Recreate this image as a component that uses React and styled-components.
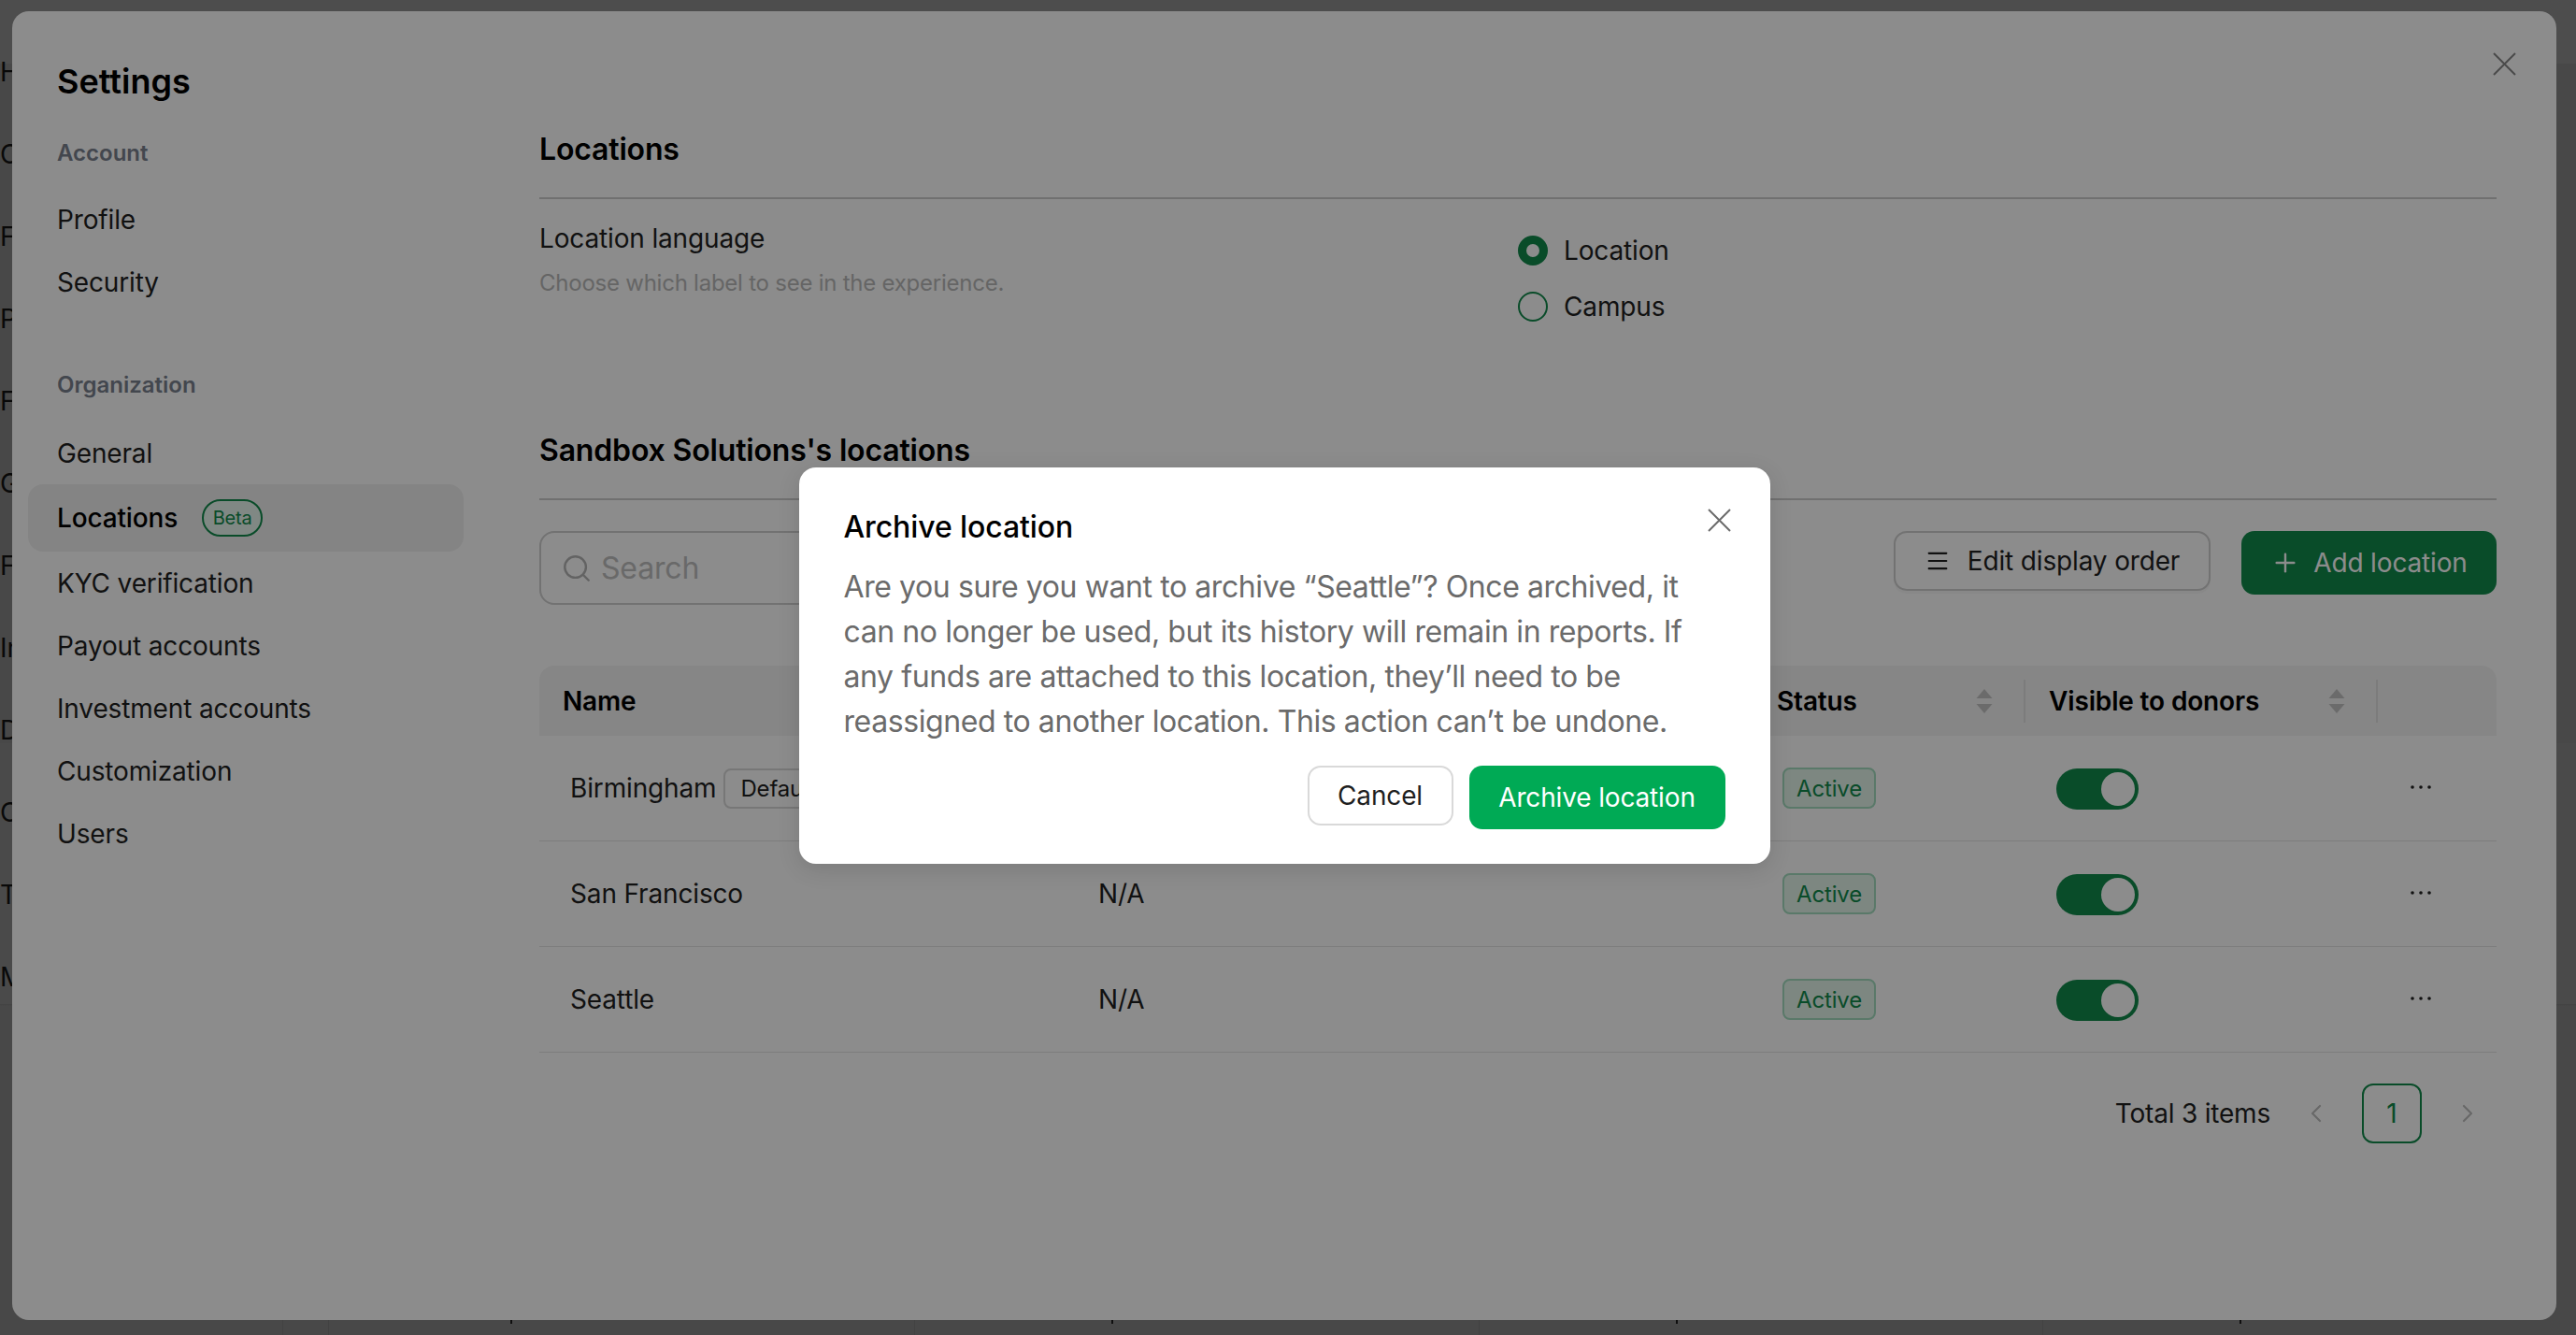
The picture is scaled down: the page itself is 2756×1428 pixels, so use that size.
import React from 'react';
import styled, { createGlobalStyle } from 'styled-components';
import { Search, Menu, Plus, ChevronLeft, ChevronRight } from 'lucide-react';

const GlobalStyle = createGlobalStyle`
	html, body {
		margin: 0;
		padding: 0;
		height: 100%;
		overflow: hidden;
	}
	body {
		font-family: Inter, "Liberation Sans", sans-serif;
		color: #1f1f1f;
		background: #f0f0f0;
	}
`;

const GREEN = '#00aa55';
const SHEET_GREEN = '#128a4c';

const accountLinks = ['Profile', 'Security'];
const orgLinks = ['General', 'Locations', 'KYC verification', 'Payout accounts', 'Investment accounts', 'Customization', 'Users'];
const hiddenNav = ['H', 'C', 'F', 'P', 'F', 'G', 'F', 'In', 'D', 'C', 'T', 'M'];
const backTicks = [
	{ x: 302, soft: true }, { x: 351, soft: true }, { x: 546 }, { x: 978, soft: true },
	{ x: 1189 }, { x: 1582, soft: true }, { x: 1793 }, { x: 2185, soft: true }, { x: 2396 },
];
const rows = [
	{ name: 'Birmingham', isDefault: true, code: '' },
	{ name: 'San Francisco', code: 'N/A' },
	{ name: 'Seattle', code: 'N/A' },
];

const CloseIcon = ({ size = 25 }) => (
	<svg width={size} height={size} viewBox="0 0 25 25" fill="none" stroke="currentColor" strokeWidth="2">
		<path d="M1 1L24 24M24 1L1 24" />
	</svg>
);

const SortIcon = () => (
	<svg width="18" height="26" viewBox="0 0 18 26" fill="#c4c4c4">
		<path d="M9 0L17.5 10H0.5Z" />
		<path d="M0.5 16H17.5L9 26Z" />
	</svg>
);

const DotsIcon = () => (
	<svg width="22" height="4" viewBox="0 0 22 4" fill="#1f1f1f">
		<circle cx="2" cy="2" r="1.8" />
		<circle cx="11" cy="2" r="1.8" />
		<circle cx="20" cy="2" r="1.8" />
	</svg>
);

export default function App() {
	return (
		<>
			<GlobalStyle />
			<BackPage>
				<BackNav>
					{hiddenNav.map((letter, index) => (
						<BackNavItem key={index}>{letter}</BackNavItem>
					))}
				</BackNav>
				{backTicks.map((tick) => (
					<BackTick key={tick.x} $x={tick.x} $soft={tick.soft} />
				))}
			</BackPage>

			<SheetMask>
				<Sheet>
					<SheetClose><CloseIcon /></SheetClose>

					<Sidebar>
						<SettingsTitle>Settings</SettingsTitle>
						<GroupLabel $top={35} $bottom={20}>Account</GroupLabel>
						{accountLinks.map((link) => (
							<NavItem key={link}>{link}</NavItem>
						))}
						<GroupLabel $top={60} $bottom={22}>Organization</GroupLabel>
						{orgLinks.map((link) => (
							<NavItem key={link} $active={link === 'Locations'}>
								{link}
								{link === 'Locations' && <BetaPill>Beta</BetaPill>}
							</NavItem>
						))}
					</Sidebar>

					<Main>
						<SectionHeader>Locations</SectionHeader>
						<LanguageRow>
							<div>
								<FieldLabel>Location language</FieldLabel>
								<FieldHint>Choose which label to see in the experience.</FieldHint>
							</div>
							<RadioGroup>
								<RadioRow><RadioDot $checked />Location</RadioRow>
								<RadioRow><RadioDot />Campus</RadioRow>
							</RadioGroup>
						</LanguageRow>

						<SectionHeader $top={114}>Sandbox Solutions's locations</SectionHeader>

						<Toolbar>
							<SearchBox>
								<Search size={34} strokeWidth={1.7} color="#b5b5b5" />
								<SearchText>Search</SearchText>
							</SearchBox>
							<ToolbarActions>
								<EditButton><Menu size={28} strokeWidth={1.8} />Edit display order</EditButton>
								<AddButton><Plus size={32} strokeWidth={1.8} />Add location</AddButton>
							</ToolbarActions>
						</Toolbar>

						<TableHead>
							<HeadCell>Name</HeadCell>
							<HeadCell />
							<HeadCell $divider>Status<SortIcon /></HeadCell>
							<HeadCell $divider>Visible to donors<SortIcon /></HeadCell>
							<HeadCell />
						</TableHead>
						{rows.map((row) => (
							<TableRow key={row.name}>
								<Cell>
									{row.name}
									{row.isDefault && <DefaultTag>Default</DefaultTag>}
								</Cell>
								<Cell>{row.code}</Cell>
								<StatusCell><ActiveBadge>Active</ActiveBadge></StatusCell>
								<Cell><Toggle><Knob /></Toggle></Cell>
								<DotsCell><DotsIcon /></DotsCell>
							</TableRow>
						))}

						<Pagination>
							<TotalText>Total 3 items</TotalText>
							<PageArrow><ChevronLeft size={32} strokeWidth={1.6} /></PageArrow>
							<PageBox>1</PageBox>
							<PageArrow><ChevronRight size={32} strokeWidth={1.6} /></PageArrow>
						</Pagination>
					</Main>
				</Sheet>
			</SheetMask>

			<DialogMask>
				<Dialog>
					<DialogClose><CloseIcon /></DialogClose>
					<DialogTitle>Archive location</DialogTitle>
					<DialogText>
						Are you sure you want to archive “Seattle”? Once archived, it can no longer be used, but its history will remain in reports. If any funds are attached to this location, they’ll need to be reassigned to another location. This action can’t be undone.
					</DialogText>
					<DialogActions>
						<CancelButton>Cancel</CancelButton>
						<ConfirmButton>Archive location</ConfirmButton>
					</DialogActions>
				</Dialog>
			</DialogMask>
		</>
	);
}

const BackPage = styled.div`
	position: fixed;
	inset: 0;
	overflow: hidden;
	background: linear-gradient(
		#ffffff 0,
		#ffffff 68px,
		#eeeeee 68px,
		#eeeeee 795px,
		#f6f6f6 795px,
		#f6f6f6 1074px,
		#e0e0e0 1074px,
		#eeeeee 1076px
	);
`;

const BackNav = styled.div`
	display: flex;
	flex-direction: column;
	padding-top: 33px;
`;

const BackNavItem = styled.div`
	height: 88px;
	line-height: 88px;
	font-size: 28px;
	color: #1f1f1f;
`;

const BackTick = styled.span`
	position: absolute;
	left: ${(p) => p.$x}px;
	top: 1412px;
	width: ${(p) => (p.$soft ? 1 : 2)}px;
	height: ${(p) => (p.$soft ? 16 : 4)}px;
	background: ${(p) => (p.$soft ? '#dddddd' : '#333333')};
`;

const SheetMask = styled.div`
	position: fixed;
	inset: 0;
	display: flex;
	padding: 12px 21px 16px 13px;
	box-sizing: border-box;
	background: rgba(0, 0, 0, 0.45);
`;

const Sheet = styled.div`
	position: relative;
	flex: 1;
	display: flex;
	background: #fff;
	border-radius: 18px;
`;

const SheetClose = styled.div`
	position: absolute;
	top: 44px;
	right: 43px;
	color: #888;
	line-height: 0;
`;

const Sidebar = styled.nav`
	width: 564px;
	flex: none;
	box-sizing: border-box;
	padding: 50px 81px 0 17px;
`;

const SettingsTitle = styled.div`
	height: 50px;
	line-height: 50px;
	padding-left: 31px;
	font-size: 36px;
	font-weight: 600;
	color: #000;
`;

const GroupLabel = styled.div`
	height: 34px;
	line-height: 34px;
	margin: ${(p) => p.$top}px 0 ${(p) => p.$bottom}px;
	padding-left: 31px;
	font-size: 24px;
	font-weight: 600;
	color: #7a818f;
`;

const NavItem = styled.div`
	display: flex;
	align-items: center;
	gap: 25px;
	height: ${(p) => (p.$active ? 72 : 67)}px;
	padding-left: 31px;
	border-radius: 16px;
	font-size: 28px;
	letter-spacing: -0.15px;
	font-weight: ${(p) => (p.$active ? 500 : 400)};
	color: ${(p) => (p.$active ? '#000' : '#1f1f1f')};
	background: ${(p) => (p.$active ? '#f1f1f1' : 'transparent')};
`;

const BetaPill = styled.span`
	display: flex;
	align-items: center;
	justify-content: center;
	width: 65px;
	height: 40px;
	margin-left: 1px;
	box-sizing: border-box;
	border: 2px solid ${SHEET_GREEN};
	border-radius: 20px;
	background: #eaf7f0;
	font-size: 20px;
	font-weight: 400;
	color: ${SHEET_GREEN};
`;

const Main = styled.main`
	flex: 1;
	min-width: 0;
	padding: 128px 64px 0 0;
`;

const SectionHeader = styled.h2`
	margin: ${(p) => p.$top || 0}px 0 0;
	height: 40px;
	line-height: 40px;
	padding-bottom: 31px;
	border-bottom: 2px solid #cccccc;
	font-size: 32px;
	font-weight: 600;
	letter-spacing: -0.16px;
	color: #000;
`;

const LanguageRow = styled.div`
	display: grid;
	grid-template-columns: 1047px 1fr;
	padding-top: 22px;
`;

const FieldLabel = styled.div`
	height: 40px;
	line-height: 40px;
	font-size: 28px;
	letter-spacing: -0.15px;
	color: #1f1f1f;
`;

const FieldHint = styled.div`
	height: 36px;
	line-height: 36px;
	margin-top: 10px;
	font-size: 24px;
	letter-spacing: -0.24px;
	color: #b9b9b9;
`;

const RadioGroup = styled.div`
	display: flex;
	flex-direction: column;
	gap: 20px;
	padding-top: 13px;
`;

const RadioRow = styled.div`
	display: flex;
	align-items: center;
	gap: 17px;
	height: 40px;
	font-size: 28px;
	letter-spacing: -0.15px;
	color: #1f1f1f;
`;

const RadioDot = styled.span`
	display: block;
	width: 32px;
	height: 32px;
	box-sizing: border-box;
	border-radius: 50%;
	border: ${(p) => (p.$checked ? `9px solid ${SHEET_GREEN}` : `2px solid ${SHEET_GREEN}`)};
	background: #fff;
`;

const Toolbar = styled.div`
	display: flex;
	justify-content: space-between;
	align-items: flex-start;
	margin-top: 33px;
`;

const SearchBox = styled.div`
	display: flex;
	align-items: center;
	gap: 9px;
	width: 560px;
	height: 79px;
	padding-left: 21px;
	box-sizing: border-box;
	border: 2px solid #cfcfcf;
	border-radius: 16px;
`;

const SearchText = styled.span`
	font-size: 32px;
	letter-spacing: -0.16px;
	color: #c0c0c0;
`;

const ToolbarActions = styled.div`
	display: flex;
	align-items: flex-start;
	gap: 33px;
`;

const EditButton = styled.button`
	display: flex;
	align-items: center;
	gap: 18px;
	width: 339px;
	height: 64px;
	justify-content: center;
	box-sizing: border-box;
	border: 2px solid #d0d0d0;
	border-radius: 14px;
	background: #fff;
	box-shadow: 0 3px 0 rgba(0, 0, 0, 0.03);
	font: inherit;
	font-size: 28px;
	letter-spacing: -0.15px;
	color: #1f1f1f;
`;

const AddButton = styled.button`
	display: flex;
	align-items: center;
	justify-content: center;
	gap: 14px;
	width: 273px;
	height: 68px;
	border: 0;
	border-radius: 14px;
	background: ${SHEET_GREEN};
	font: inherit;
	font-size: 28px;
	letter-spacing: -0.15px;
	color: #fff;
`;

const columns = '565px 734px 291px 377px 127px';

const TableHead = styled.div`
	display: grid;
	grid-template-columns: ${columns};
	align-items: center;
	height: 75px;
	margin-top: 65px;
	border-radius: 16px 16px 0 0;
	background: #f4f4f4;
`;

const HeadCell = styled.div`
	display: flex;
	align-items: center;
	justify-content: space-between;
	height: 46px;
	padding: 0 33px 0 25px;
	font-size: 28px;
	font-weight: 600;
	letter-spacing: -0.15px;
	color: #000;
	border-right: ${(p) => (p.$divider ? '2px solid #e2e2e2' : '0')};
`;

const TableRow = styled.div`
	display: grid;
	grid-template-columns: ${columns};
	align-items: center;
	height: 112px;
	border-bottom: 1px solid #e4e4e4;
`;

const Cell = styled.div`
	display: flex;
	align-items: center;
	gap: 8px;
	padding-left: 33px;
	font-size: 28px;
	letter-spacing: -0.15px;
	color: #1f1f1f;
`;

const StatusCell = styled(Cell)`
	padding-left: 31px;
`;

const DotsCell = styled.div`
	display: flex;
	justify-content: center;
	padding-right: 36px;
	margin-top: -2px;
`;

const DefaultTag = styled.span`
	display: flex;
	align-items: center;
	height: 43px;
	padding: 0 16px;
	box-sizing: border-box;
	border: 2px solid #d9d9d9;
	border-radius: 8px;
	font-size: 24px;
`;

const ActiveBadge = styled.span`
	display: flex;
	align-items: center;
	justify-content: center;
	width: 100px;
	height: 44px;
	box-sizing: border-box;
	border: 2px solid #a4dcbf;
	border-radius: 8px;
	background: #e3f6ec;
	font-size: 24px;
	color: ${SHEET_GREEN};
`;

const Toggle = styled.span`
	position: relative;
	display: block;
	width: 88px;
	height: 44px;
	margin-top: 2px;
	border-radius: 22px;
	background: ${SHEET_GREEN};
`;

const Knob = styled.span`
	position: absolute;
	top: 4px;
	right: 4px;
	width: 36px;
	height: 36px;
	border-radius: 50%;
	background: #fff;
`;

const Pagination = styled.div`
	display: flex;
	align-items: center;
	justify-content: flex-end;
	margin-top: 33px;
	padding-right: 6px;
`;

const TotalText = styled.span`
	margin-right: 24px;
	font-size: 28px;
	letter-spacing: -0.2px;
	color: #1f1f1f;
`;

const PageArrow = styled.span`
	display: flex;
	align-items: center;
	justify-content: center;
	width: 50px;
	color: #bdbdbd;
`;

const PageBox = styled.span`
	display: flex;
	align-items: center;
	justify-content: center;
	width: 64px;
	height: 64px;
	margin: 0 24px;
	box-sizing: border-box;
	border: 2px solid ${SHEET_GREEN};
	border-radius: 12px;
	font-size: 28px;
	color: ${SHEET_GREEN};
`;

const DialogMask = styled.div`
	position: fixed;
	inset: 0;
	display: flex;
	align-items: center;
	justify-content: center;
	padding: 0 8px 4px 0;
	background: rgba(0, 0, 0, 0.45);
`;

const Dialog = styled.div`
	position: relative;
	width: 1039px;
	height: 424px;
	box-sizing: border-box;
	padding: 44px 47px 0 48px;
	border-radius: 18px;
	background: #fff;
	box-shadow: 0 6px 24px rgba(0, 0, 0, 0.12);
`;

const DialogClose = styled.div`
	position: absolute;
	top: 44px;
	right: 42px;
	color: #6b6b6b;
	line-height: 0;
`;

const DialogTitle = styled.div`
	height: 40px;
	line-height: 40px;
	font-size: 32px;
	font-weight: 500;
	letter-spacing: -0.1px;
	color: #000;
`;

const DialogText = styled.div`
	max-width: 910px;
	margin-top: 20px;
	font-size: 32px;
	line-height: 48px;
	letter-spacing: -0.41px;
	color: #6b6b6b;
`;

const DialogActions = styled.div`
	display: flex;
	align-items: flex-start;
	justify-content: flex-end;
	gap: 17px;
	margin-top: 23px;
	margin-right: 1px;
`;

const CancelButton = styled.button`
	width: 156px;
	height: 64px;
	box-sizing: border-box;
	border: 2px solid #d9d9d9;
	border-radius: 14px;
	background: #fff;
	font: inherit;
	font-size: 28px;
	letter-spacing: -0.15px;
	color: #1f1f1f;
`;

const ConfirmButton = styled.button`
	width: 274px;
	height: 68px;
	border: 0;
	border-radius: 14px;
	background: ${GREEN};
	font: inherit;
	font-size: 28px;
	letter-spacing: -0.15px;
	color: #fff;
`;
